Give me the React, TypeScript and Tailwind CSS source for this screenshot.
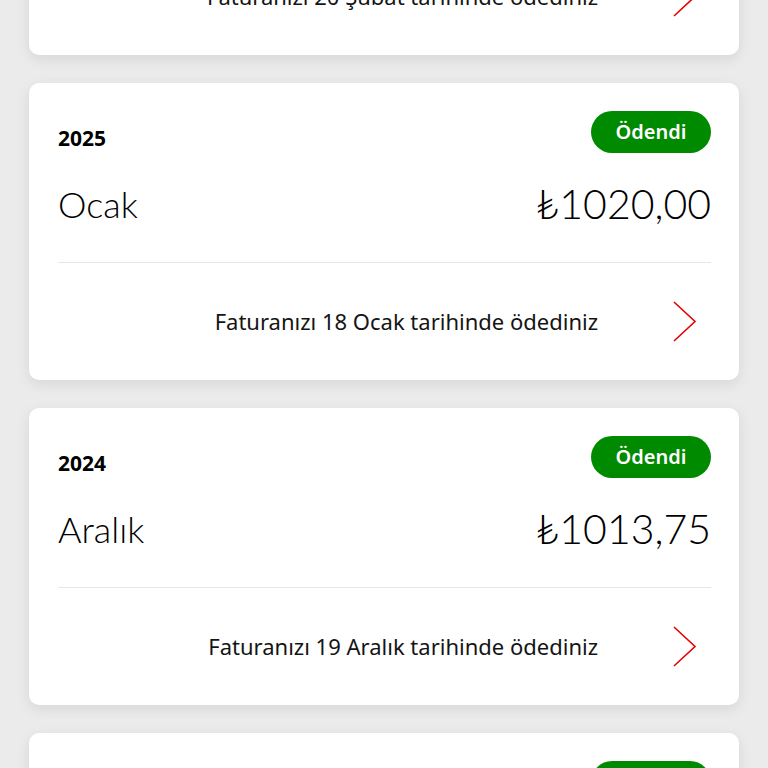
import { useMemo } from "react";

type Bill = {
  year: string;
  month: string;
  amount: string;
  paidText: string;
};

const bills: Bill[] = [
  { year: "2025", month: "Şubat", amount: "1020,00", paidText: "Faturanızı 20 Şubat tarihinde ödediniz" },
  { year: "2025", month: "Ocak", amount: "1020,00", paidText: "Faturanızı 18 Ocak tarihinde ödediniz" },
  { year: "2024", month: "Aralık", amount: "1013,75", paidText: "Faturanızı 19 Aralık tarihinde ödediniz" },
  { year: "2024", month: "Kasım", amount: "1013,75", paidText: "Faturanızı 18 Kasım tarihinde ödediniz" },
];

export default function App() {
  const list = useMemo(() => bills, []);
  return (
    <div className="h-[768px] w-[768px] overflow-hidden bg-[#ebebeb] font-['Noto_Sans','Open_Sans',sans-serif] text-black">
      {/* list is scrolled: first card sits mostly above the fold */}
      <div className="-mt-[242px] flex flex-col gap-[28px] px-[29px]">
        {list.map((b, i) => (
          <BillCard key={i} bill={b} />
        ))}
      </div>
    </div>
  );
}

function BillCard({ bill }: { bill: Bill }) {
  return (
    <article className="h-[297px] shrink-0 rounded-[10px] bg-white pl-[29px] pr-[28px] pt-[28px] shadow-[0_4px_14px_rgba(0,0,0,0.09)]">
      <div className="flex items-center justify-between">
        <span className="mt-3 text-[21px] font-bold leading-none">{bill.year}</span>
        <span className="flex h-[42px] w-[120px] items-center justify-center rounded-full bg-[#008a00] text-[20px] font-semibold text-white">
          Ödendi
        </span>
      </div>

      <div className="mt-[33px] flex items-center justify-between border-b border-[#e6e6e6] pb-[40px] font-['Lato',sans-serif]">
        <span className="h-[36px] text-[36px] font-light leading-[36px]">{bill.month}</span>
        <span className="h-[36px] text-[41px] font-light leading-[36px]">₺{bill.amount}</span>
      </div>

      <div className="flex h-[116px] items-center justify-end pr-[14px]">
        <span className="text-[22px] leading-none text-[#141414]">{bill.paidText}</span>
        <svg width="24" height="41" viewBox="0 0 24 41" className="ml-[75px] shrink-0" aria-hidden>
          <polyline points="1,1 22,20.5 1,40" fill="none" stroke="#e60000" strokeWidth="1.6" />
        </svg>
      </div>
    </article>
  );
}
